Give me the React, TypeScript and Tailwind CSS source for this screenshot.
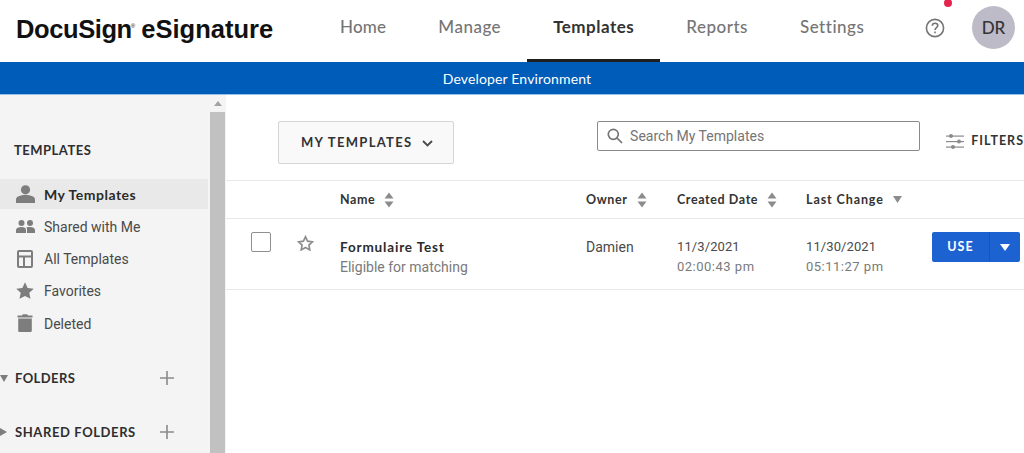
import React from "react";

const Sort = ({ className = "" }: { className?: string }) => (
  <svg width="10" height="16" viewBox="0 0 10 16" className={className} fill="#8c8c8c">
    <path d="M5 0.5 L9.5 6.5 H0.5 Z" />
    <path d="M5 15.5 L9.5 9.5 H0.5 Z" />
  </svg>
);

const NavLink = ({ label, active, tight }: { label: string; active?: boolean; tight?: boolean }) => (
  <div className={`h-[62px] flex items-center justify-center px-[26px] pb-[7px] border-b-[3px] ${active ? "border-[#1e1e1e] text-[#333333] font-bold" : "border-transparent text-[#757575] font-medium"}`}>
    <span className={`text-[17px] leading-none ${tight ? "tracking-[0.2px]" : "tracking-[0.5px]"}`}>{label}</span>
  </div>
);

const SideItem = ({ label, icon, active }: { label: string; icon: React.ReactNode; active?: boolean }) => (
  <div className={`h-[30px] mb-[2.25px] flex items-center ${active ? "bg-[#e9e9e9] font-bold text-[#2b2b2b] tracking-[0.5px]" : "text-[#4a4a4a]"}`}>
    <div className="w-[44px] flex justify-center pl-[2px] shrink-0 ml-[2px] -mr-[2px]">{icon}</div>
    <span className="text-[14px] leading-none pt-[1px]" style={active ? undefined : { fontFamily: "Roboto, sans-serif" }}>{label}</span>
  </div>
);

const Person = () => (
  <svg width="19" height="18" viewBox="0 0 19 18" fill="#7d7d7d">
    <circle cx="9.5" cy="4.8" r="4.6" />
    <path d="M0 18 V14.5 C0 11.5 4 10 9.5 10 C15 10 19 11.5 19 14.5 V18 Z" />
  </svg>
);
const People = () => (
  <svg width="19" height="13" viewBox="0 0 19 13" fill="#7d7d7d">
    <circle cx="5.5" cy="3" r="3" />
    <circle cx="14" cy="3" r="3" />
    <path d="M0 13 V10 C0 8 2.5 7 5.5 7 C8.5 7 10 8 10 10 V13 Z" />
    <path d="M11 13 V9.5 C11 8.6 10.8 8 10.3 7.4 C11.3 7.1 12.6 7 14 7 C16.8 7 19 8 19 10 V13 Z" />
  </svg>
);
const Layout = () => (
  <svg width="16" height="18" viewBox="0 0 16 18" fill="none" stroke="#7d7d7d" strokeWidth="2">
    <rect x="1" y="1" width="14" height="16" rx="1" />
    <path d="M1 6.5 H15 M7 6.5 V17" />
  </svg>
);
const StarSolid = () => (
  <svg width="18" height="17" viewBox="0 0 24 23" fill="#7d7d7d">
    <path d="M12 0.5 L15.6 8 L23.8 9 L17.8 14.7 L19.4 22.8 L12 18.8 L4.6 22.8 L6.2 14.7 L0.2 9 L8.4 8 Z" />
  </svg>
);
const Trash = () => (
  <svg width="16" height="18" viewBox="0 0 16 18" fill="#7d7d7d">
    <path d="M0.5 1.5 H5 L5.8 0.3 H10.2 L11 1.5 H15.5 V3.4 H0.5 Z" />
    <path d="M1.2 4.4 H14.8 V16.4 C14.8 17.3 14.1 18 13.2 18 H2.8 C1.9 18 1.2 17.3 1.2 16.4 Z" />
  </svg>
);
const Plus = () => (
  <svg width="14" height="14" viewBox="0 0 14 14" stroke="#8a8a8a" strokeWidth="1.6">
    <path d="M7 0 V14 M0 7 H14" />
  </svg>
);

const roboto = { fontFamily: "Roboto, sans-serif" };

export default function App() {
  return (
    <div className="w-[1024px] h-[453px] overflow-hidden bg-white flex flex-col" style={{ fontFamily: "Lato, 'Noto Sans', sans-serif" }}>
      <header className="h-[62px] shrink-0 flex relative">
        <div className="w-[314px] pl-[16px] pt-[10px] shrink-0">
          <span className="text-[25.5px] leading-[32px] font-bold text-[#111111] tracking-[-0.4px] whitespace-nowrap" style={{ fontFamily: "'Liberation Sans', Arial, sans-serif" }}>
            DocuSign<span className="text-[6px] align-super tracking-normal font-normal -ml-[1px]">®</span>
            <span className="ml-[-1px] tracking-[0px]"> eSignature</span>
          </span>
        </div>
        <NavLink label="Home" tight />
        <NavLink label="Manage" />
        <NavLink label="Templates" active />
        <NavLink label="Reports" />
        <NavLink label="Settings" />
        <svg width="20" height="20" viewBox="0 0 20 20" className="ml-[35px] mt-[18px] shrink-0" fill="none" stroke="#757575" strokeWidth="1.6">
          <circle cx="10" cy="10" r="8.6" />
          <path d="M7.3 7.8 C7.3 6.2 8.5 5.2 10 5.2 C11.6 5.2 12.8 6.2 12.8 7.6 C12.8 9.6 10 9.6 10 12" />
          <path d="M10 13.6 V15.2" />
        </svg>
        <div className="absolute left-[944px] top-0 w-[8px] h-[8px] -mt-[1px] rounded-full bg-[#e4244f]" />
        <div className="absolute left-[972px] top-[6px] w-[43px] h-[43px] rounded-full bg-[#bdbbc7] flex items-center justify-center text-[17px] font-medium text-[#333333]">DR</div>
      </header>

      <div className="h-[33px] shrink-0 bg-[#005cb9] border-b border-[#9dc0e6] flex items-center justify-center pl-[10px] text-[14px] tracking-[0.15px] text-white">
        Developer Environment
      </div>

      <div className="flex-1 flex min-h-0">
        <aside className="w-[226px] shrink-0 flex bg-[#f4f4f4]">
          <div className="w-[210px] shrink-0 flex flex-col">
            <div className="pl-[14px] mt-[49px] h-[14px] flex items-center text-[13px] font-bold tracking-[0.5px] text-[#2e2e2e]">TEMPLATES</div>
            <div className="mt-[21px] w-[208px]">
              <SideItem label="My Templates" icon={<Person />} active />
              <SideItem label="Shared with Me" icon={<People />} />
              <SideItem label="All Templates" icon={<Layout />} />
              <SideItem label="Favorites" icon={<StarSolid />} />
              <SideItem label="Deleted" icon={<Trash />} />
            </div>
            <div className="mt-[30px] h-[16px] flex items-center text-[13px] font-bold tracking-[0.4px] text-[#2e2e2e]">
              <svg width="8" height="7" viewBox="0 0 8 7" className="mr-[7px]" fill="#7d7d7d"><path d="M0 0 H8 L4 7 Z" /></svg>
              <span>FOLDERS</span>
              <span className="ml-auto mr-[36px] flex"><Plus /></span>
            </div>
            <div className="mt-[38px] h-[16px] flex items-center text-[13px] font-bold tracking-[0.6px] text-[#2e2e2e]">
              <svg width="7" height="8" viewBox="0 0 7 8" className="mr-[8px]" fill="#7d7d7d"><path d="M0 0 V8 L7 4 Z" /></svg>
              <span>SHARED FOLDERS</span>
              <span className="ml-auto mr-[36px] flex"><Plus /></span>
            </div>
          </div>
          <div className="w-[15px] shrink-0 flex flex-col">
            <div className="h-[17px] flex items-center justify-center">
              <svg width="8" height="5" viewBox="0 0 8 5" fill="#a3a3a3"><path d="M4 0 L8 5 H0 Z" /></svg>
            </div>
            <div className="flex-1 bg-[#c1c1c1]" />
          </div>
          <div className="w-px bg-[#f4f4f4]" />
        </aside>

        <main className="flex-1 min-w-0 flex flex-col">
          <div className="h-[85px] shrink-0 flex">
            <button className="ml-[52px] mt-[26px] w-[177px] h-[43px] bg-[#f9f9f9] border border-[#d5d5d5] rounded-[2px] flex items-center pl-[22px] pt-[1px] text-[13px] font-bold tracking-[1.3px] text-[#333333]">
              MY TEMPLATES
              <svg width="11" height="7" viewBox="0 0 11 7" className="ml-[10px]" fill="none" stroke="#4a4a4a" strokeWidth="1.8"><path d="M1 1 L5.5 5.5 L10 1" /></svg>
            </button>
            <div className="ml-[143px] mt-[26px] w-[325px] h-[30px] border border-[#8a8a8a] rounded-[2px] flex items-center pl-[9px] text-[14px] text-[#757575]" style={roboto}>
              <svg width="16" height="16" viewBox="0 0 16 16" className="mr-[7px]" fill="none" stroke="#757575" strokeWidth="1.7">
                <circle cx="6.3" cy="6.3" r="5" />
                <path d="M10 10 L15 15" />
              </svg>
              Search My Templates
            </div>
            <div className="ml-[26px] mt-[38px] h-[16px] flex items-center text-[12.5px] font-bold tracking-[1px] text-[#333333] whitespace-nowrap">
              <svg width="18" height="15" viewBox="0 0 18 15" className="mr-[7px] shrink-0" fill="#8a8a8a">
                <rect y="1.5" width="18" height="1.2" />
                <rect y="7" width="18" height="1.2" />
                <rect y="12.5" width="18" height="1.2" />
                <circle cx="5" cy="2" r="2" />
                <circle cx="13" cy="7.5" r="2" />
                <circle cx="7" cy="13" r="2" />
              </svg>
              FILTERS
            </div>
          </div>

          <div className="h-[39px] shrink-0 border-y border-[#e9e9e9] flex items-center text-[12.5px] font-bold tracking-[0.6px] text-[#333333]">
            <div className="w-[114px] shrink-0" />
            <div className="w-[246px] shrink-0 flex items-center gap-[9px]"><span className="pt-[1px]">Name</span> <Sort /></div>
            <div className="w-[91px] shrink-0 flex items-center gap-[9px]"><span className="pt-[1px]">Owner</span> <Sort /></div>
            <div className="w-[129px] shrink-0 flex items-center gap-[9px]"><span className="pt-[1px]">Created Date</span> <Sort /></div>
            <div className="flex items-center gap-[9px]">
              <span className="pt-[1px] tracking-[0.9px]">Last Change</span>
              <svg width="9" height="7" viewBox="0 0 9 7" fill="#8c8c8c"><path d="M0 0 H9 L4.5 7 Z" /></svg>
            </div>
          </div>

          <div className="h-[71px] shrink-0 border-b border-[#e9e9e9] flex items-start">
            <div className="ml-[25px] mt-[13px] w-[20px] h-[20px] border border-[#8f8f8f] rounded-[2px] bg-white shrink-0" />
            <svg width="17" height="16" viewBox="0 0 24 23" className="ml-[26px] mt-[16px] shrink-0" fill="none" stroke="#8c8c8c" strokeWidth="2.4">
              <path d="M12 2.5 L15 8.9 L22 9.8 L16.9 14.6 L18.2 21.4 L12 18 L5.8 21.4 L7.1 14.6 L2 9.8 L9 8.9 Z" />
            </svg>
            <div className="ml-[26px] w-[246px] shrink-0 mt-[20px]">
              <div className="text-[13.5px] leading-[16px] font-bold tracking-[0.85px] text-[#2b2b2b]">Formulaire Test</div>
              <div className="mt-[4px] text-[14px] leading-[16px] text-[#7a7a7a]" style={roboto}>Eligible for matching</div>
            </div>
            <div className="w-[91px] shrink-0 mt-[20px] text-[14px] leading-[16px] text-[#4a4a4a]" style={roboto}>Damien</div>
            <div className="w-[129px] shrink-0 mt-[20px] text-[13px] leading-[16px]" style={roboto}>
              <div className="text-[#4a4a4a] tracking-[0.1px]">11/3/2021</div>
              <div className="mt-[4px] text-[#7a7a7a] tracking-[0.5px]">02:00:43 pm</div>
            </div>
            <div className="w-[126px] shrink-0 mt-[20px] text-[13px] leading-[16px]" style={roboto}>
              <div className="text-[#4a4a4a] tracking-[0.1px]">11/30/2021</div>
              <div className="mt-[4px] text-[#7a7a7a] tracking-[0.5px]">05:11:27 pm</div>
            </div>
            <div className="mt-[13px] w-[88px] h-[30px] rounded-[2px] bg-[#1d62d1] flex shrink-0 text-white">
              <div className="w-[58px] flex items-center justify-center text-[12.5px] font-bold tracking-[1px] border-r border-[#1a55b5]">USE</div>
              <div className="flex-1 flex items-center justify-center">
                <svg width="10" height="7" viewBox="0 0 10 7" fill="#ffffff"><path d="M0 0 H10 L5 7 Z" /></svg>
              </div>
            </div>
          </div>
        </main>
      </div>
    </div>
  );
}
